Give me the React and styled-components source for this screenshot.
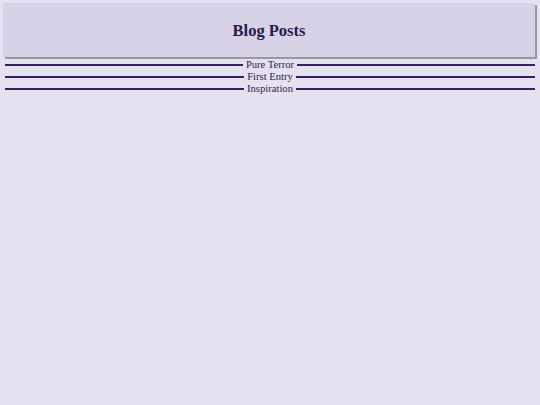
import React from "react";
import styled, { createGlobalStyle } from "styled-components";

const Global = createGlobalStyle`
  html, body { margin: 0; padding: 0; background: #e5e1ee; }
  body { font-family: "Liberation Serif", "Times New Roman", serif; }
`;

const Page = styled.div`
  padding: 3px 5px 0 3px;
`;

const Header = styled.header`
  height: 54px;
  background: #d8d2e6;
  box-shadow: 2px 2px 0 #9a97a0;
  display: flex;
  align-items: center;
  justify-content: center;
`;

const Title = styled.h1`
  margin: 2px 0 0 0;
  font-family: "Liberation Serif", "Times New Roman", serif;
  font-size: 16.5px;
  font-weight: bold;
  color: #2c1650;
`;

const List = styled.ul`
  list-style: none;
  margin: 2px 0 0 0;
  padding: 0 0 0 2px;
`;

const Item = styled.li`
  display: flex;
  align-items: center;
  gap: 3px;
  font-family: "Liberation Serif", "Times New Roman", serif;
  font-size: 10.6px;
  line-height: 12px;
  color: #32214f;
  &::before, &::after {
    content: "";
    flex: 1;
    height: 2px;
    background: #3d1c63;
  }
`;

const posts = ["Pure Terror", "First Entry", "Inspiration"];

export default function App() {
  return (
    <Page>
      <Global />
      <Header>
        <Title>Blog Posts</Title>
      </Header>
      <List>
        {posts.map((p) => (
          <Item key={p}>{p}</Item>
        ))}
      </List>
    </Page>
  );
}
